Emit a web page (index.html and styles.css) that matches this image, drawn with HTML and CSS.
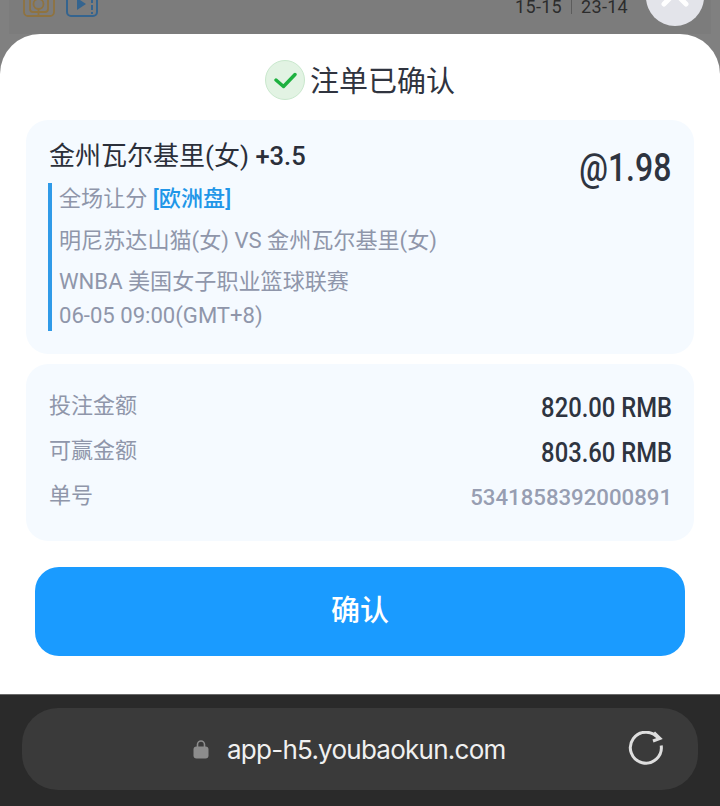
FILE: index.html
```html
<!DOCTYPE html>
<html lang="zh-CN">
<head>
  <meta charset="UTF-8">
  <meta name="viewport" content="width=device-width, initial-scale=1.0">
  <title>注单已确认</title>
  <link rel="stylesheet" href="styles.css">
</head>
<body>
  <div class="backdrop">
    <div class="backdrop-icons">
      <svg width="32" height="18" viewBox="0 0 32 18" fill="none" stroke="#8f7340" stroke-width="1.8">
        <path d="M1 -6V12a4 4 0 0 0 4 4H27a4 4 0 0 0 4-4V-6"/>
        <path d="M7 -2V9a3 3 0 0 0 3 3H22a3 3 0 0 0 3-3V-2"/>
        <path d="M15.5 9V16"/>
        <circle cx="15.5" cy="4" r="5"/>
      </svg>
      <svg width="32" height="18" viewBox="0 0 32 18" fill="none">
        <path d="M1 -6V12a4 4 0 0 0 4 4H27a4 4 0 0 0 4-4V-6" stroke="#34648f" stroke-width="2"/>
        <path d="M26 -2V14" stroke="#34648f" stroke-width="2" stroke-dasharray="5 2"/>
        <path d="M11 -2L20 4L11 10Z" fill="#34648f"/>
      </svg>
    </div>
    <div class="backdrop-score">
      <span>15-15</span><i class="score-sep"></i><span>23-14</span>
    </div>
    <div class="close-button">
      <svg width="30" height="30" viewBox="0 0 30 30" fill="none" stroke="#fff" stroke-width="5" stroke-linecap="round">
        <path d="M4 -6L26 16M26 -6L4 16"/>
      </svg>
    </div>
  </div>

  <div class="sheet">
    <h2 class="sheet-title">
      <span class="check-badge">
        <svg width="24" height="24" viewBox="0 0 24 24" fill="none" stroke="#1db13f" stroke-width="3.4" stroke-linecap="round" stroke-linejoin="round">
          <path d="M3 12L10.5 18.5L22 6.5"/>
        </svg>
      </span>
      <span class="sheet-title-text">注单已确认</span>
    </h2>

    <div class="card bet-card">
      <div class="bet-head">
        <div class="bet-team">金州瓦尔基里(女) <span class="bet-line">+3.5</span></div>
        <div class="bet-odds">@1.98</div>
      </div>
      <div class="bet-info">
        <div class="info-row">全场让分 <b class="market">[欧洲盘]</b></div>
        <div class="info-row">明尼苏达山猫(女) VS 金州瓦尔基里(女)</div>
        <div class="info-row">WNBA 美国女子职业篮球联赛</div>
        <div class="info-row info-time">06-05 09:00(GMT+8)</div>
      </div>
    </div>

    <div class="card summary-card">
      <div class="summary-row"><span class="summary-label">投注金额</span><span class="summary-value">820.00 RMB</span></div>
      <div class="summary-row"><span class="summary-label">可赢金额</span><span class="summary-value">803.60 RMB</span></div>
      <div class="summary-row"><span class="summary-label">单号</span><span class="summary-id">5341858392000891</span></div>
    </div>

    <button class="confirm-button">确认</button>
  </div>

  <div class="browser-bar">
    <div class="url-pill">
      <svg class="lock" width="16" height="20" viewBox="0 0 16 20">
        <path d="M4.5 9V5.5a3.5 3.5 0 0 1 7 0V9" fill="none" stroke="#8c8c8c" stroke-width="1.6"/>
        <rect x="0.5" y="7.5" width="15" height="12" rx="3" fill="#8c8c8c"/>
      </svg>
      <span class="url-text">app-h5.youbaokun.com</span>
      <svg class="reload" width="36" height="36" viewBox="0 0 36 36" fill="none" stroke="#dedede" stroke-width="3">
        <path d="M33.2 14.5A15.5 15.5 0 1 1 31 8.5"/>
        <path d="M26 1.5L32 7.5L25 10"/>
      </svg>
    </div>
  </div>
</body>
</html>
```

FILE: styles.css
```css
html, body {
  margin: 0;
  padding: 0;
  height: 100%;
  font-family: Roboto, "Noto Sans CJK SC", sans-serif;
  background: #808080;
  overflow: hidden;
}

body {
  display: flex;
  flex-direction: column;
  height: 806px;
}

.backdrop {
  flex: 0 0 34px;
  display: flex;
  align-items: flex-start;
  position: relative;
  background: #7c7c7c;
  overflow: hidden;
  margin: 0 9px;
}

.backdrop-icons {
  display: flex;
  gap: 11px;
  margin-left: 14px;
}

.backdrop-score {
  margin-left: auto;
  margin-right: 83px;
  display: flex;
  align-items: center;
  gap: 9px;
  height: 13px;
  font-size: 18px;
  line-height: 13px;
  letter-spacing: 0.3px;
  color: #2c2c2c;
}

.score-sep {
  width: 1px;
  height: 14px;
  background: #5c5c5c;
}

.close-button {
  position: absolute;
  top: -32px;
  right: 7px;
  width: 58px;
  height: 58px;
  border-radius: 50%;
  background: #e3e4ea;
  display: flex;
  align-items: flex-end;
  justify-content: center;
}

.close-button svg {
  margin-bottom: 8px;
}

.sheet {
  flex: 1;
  background: #fff;
  border-radius: 40px 40px 0 0;
  padding: 23px 26px 0;
  box-sizing: border-box;
  display: flex;
  flex-direction: column;
}

.sheet-title {
  margin: 0 0 17px;
  height: 46px;
  display: flex;
  align-items: center;
  justify-content: center;
  gap: 5px;
  font-size: 29px;
  font-weight: 400;
  color: #30343f;
}

.sheet-title-text {
  padding-bottom: 2px;
}

.check-badge {
  width: 40px;
  height: 40px;
  border-radius: 50%;
  background: #e2f3e3;
  border: 1px solid #c9e8cd;
  box-sizing: border-box;
  display: flex;
  align-items: center;
  justify-content: center;
}

.card {
  background: #f5faff;
  border-radius: 22px;
}

.bet-card {
  padding: 20px 22px 0;
  height: 234px;
  box-sizing: border-box;
  margin-bottom: 10px;
}

.bet-head {
  display: flex;
  justify-content: space-between;
  align-items: flex-start;
  height: 43px;
}

.bet-team {
  font-size: 26px;
  line-height: 33px;
  color: #2b2f3a;
  margin-left: 1px;
}

.bet-line {
  font-weight: 500;
  font-size: 25.5px;
}

.bet-odds {
  font-size: 39px;
  line-height: 52px;
  color: #2e3440;
  font-weight: 500;
  margin-top: 2px;
  margin-right: 1px;
  transform: scaleX(0.82);
  transform-origin: right center;
}

.bet-info {
  border-left: 4px solid #2f9ae8;
  padding-left: 7px;
  height: 148px;
  color: #8f96aa;
  font-size: 22.1px;
}

.info-row {
  height: 41px;
  line-height: 30px;
}

.info-row:first-child {
  height: 42px;
}

.info-time {
  height: 34px;
  margin-top: -7px;
}

.market {
  color: #2196e8;
  font-weight: 500;
}

.summary-card {
  height: 177px;
  box-sizing: border-box;
  padding: 18px 22px 18px 23px;
  display: flex;
  flex-direction: column;
}

.summary-row {
  height: 45px;
  display: flex;
  justify-content: space-between;
  align-items: center;
}

.summary-label {
  font-size: 22px;
  color: #8f96aa;
  padding-bottom: 4px;
}

.summary-value {
  font-weight: 500;
  font-size: 28px;
  color: #2e3440;
  padding-top: 6px;
  transform: scaleX(0.85);
  transform-origin: right center;
}

.summary-id {
  font-size: 22.2px;
  font-weight: 500;
  color: #979eb2;
  padding-top: 4px;
}

.confirm-button {
  margin: 26px 9px 0;
  flex: 0 0 89px;
  border: none;
  border-radius: 24px;
  background: #1a9bff;
  color: #fff;
  font-family: inherit;
  font-size: 29px;
  font-weight: 500;
  padding: 0 0 7px;
}

.browser-bar {
  flex: 0 0 112px;
  background: #2a2a2a;
  border-top: 1px solid #6a6a6a;
  box-sizing: border-box;
  padding: 13px 22px 16px;
}

.url-pill {
  height: 82px;
  border-radius: 36px;
  background: #3a3a3a;
  display: flex;
  align-items: center;
  padding-left: 171px;
  padding-right: 34px;
}

.lock {
  margin-right: 18px;
}

.url-text {
  font-family: Inter, Roboto, sans-serif;
  font-size: 26px;
  letter-spacing: -0.75px;
  color: #f0f0f0;
}

.reload {
  margin-left: auto;
}
```
